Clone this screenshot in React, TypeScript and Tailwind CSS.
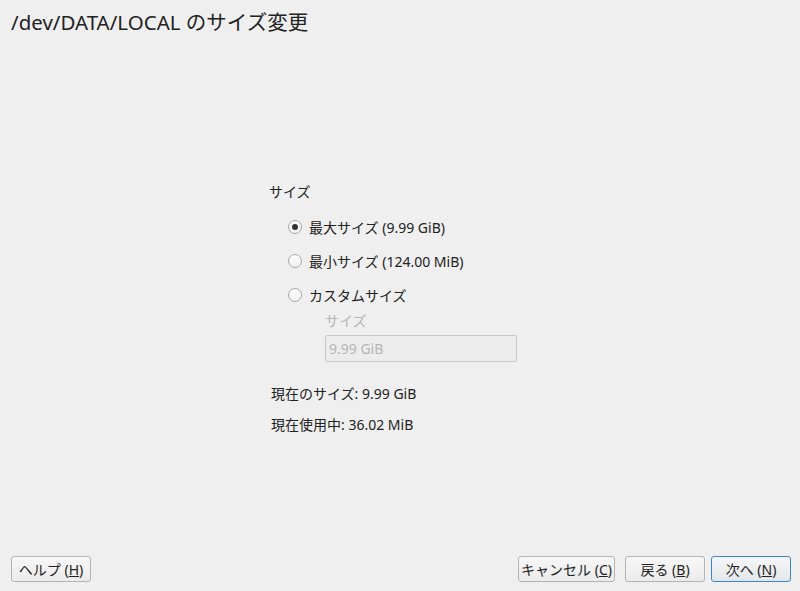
import React from "react";

const font = { fontFamily: '"Noto Sans", "Noto Sans CJK JP", sans-serif' };

function Radio({ checked }: { checked?: boolean }) {
  return (
    <span className="w-[14px] h-[14px] rounded-full border border-[#a8a8a8] bg-gradient-to-b from-[#fdfdfd] to-[#f0f0f0] flex items-center justify-center shrink-0">
      {checked && <span className="w-[6px] h-[6px] rounded-full bg-[#333]" />}
    </span>
  );
}

function Btn({ children, w, primary }: { children: React.ReactNode; w: string; primary?: boolean }) {
  return (
    <div
      className={`${w} h-[26px] rounded-[3px] border flex items-center justify-center text-[14px] text-[#222] ${
        primary
          ? "border-[#3a86c8] bg-gradient-to-b from-[#f6f7f8] to-[#e3e6e9]"
          : "border-[#b4b4b4] bg-gradient-to-b from-[#f7f7f7] to-[#ebebeb]"
      }`}
    >
      {children}
    </div>
  );
}

export default function App() {
  return (
    <div className="w-[800px] h-[591px] bg-[#efefef] flex flex-col text-[#222]" style={font}>
      <div className="pl-[11px] pt-[8px] text-[20.5px] leading-[28px]">/dev/DATA/LOCAL のサイズ変更</div>
      <div className="flex-1">
        <div className="w-[262px] mx-auto mt-[146px] text-[14px]">
          <div className="leading-[20px]">サイズ</div>
          <div className="pl-[19px] mt-[15px] flex flex-col">
            <div className="flex items-center gap-[7px] h-[20px]">
              <Radio checked />
              <span>最大サイズ (9.99 GiB)</span>
            </div>
            <div className="flex items-center gap-[7px] h-[20px] mt-[14px]">
              <Radio />
              <span>最小サイズ (124.00 MiB)</span>
            </div>
            <div className="flex items-center gap-[7px] h-[20px] mt-[14px]">
              <Radio />
              <span>カスタムサイズ</span>
            </div>
            <div className="pl-[37px] mt-[6px]">
              <div className="text-[#b5b5b5] leading-[20px]">サイズ</div>
              <div className="w-[192px] h-[27px] mt-[4px] border border-[#c9c9c9] rounded-[2px] bg-[#ececec] text-[#b5b5b5] flex items-center pl-[3px]">
                9.99 GiB
              </div>
            </div>
          </div>
          <div className="mt-[22px] pl-[2px] leading-[20px]">現在のサイズ: 9.99 GiB</div>
          <div className="mt-[11px] pl-[2px] leading-[20px]">現在使用中: 36.02 MiB</div>
        </div>
      </div>
      <div className="flex items-center pl-[11px] pr-[9px] pb-[9px]">
        <Btn w="w-[80px]">
          ヘルプ (<span className="underline">H</span>)
        </Btn>
        <div className="flex-1" />
        <Btn w="w-[97px]">
          キャンセル (<span className="underline">C</span>)
        </Btn>
        <div className="w-[10px]" />
        <Btn w="w-[80px]">
          戻る (<span className="underline">B</span>)
        </Btn>
        <div className="w-[6px]" />
        <Btn w="w-[80px]" primary>
          次へ (<span className="underline">N</span>)
        </Btn>
      </div>
    </div>
  );
}
